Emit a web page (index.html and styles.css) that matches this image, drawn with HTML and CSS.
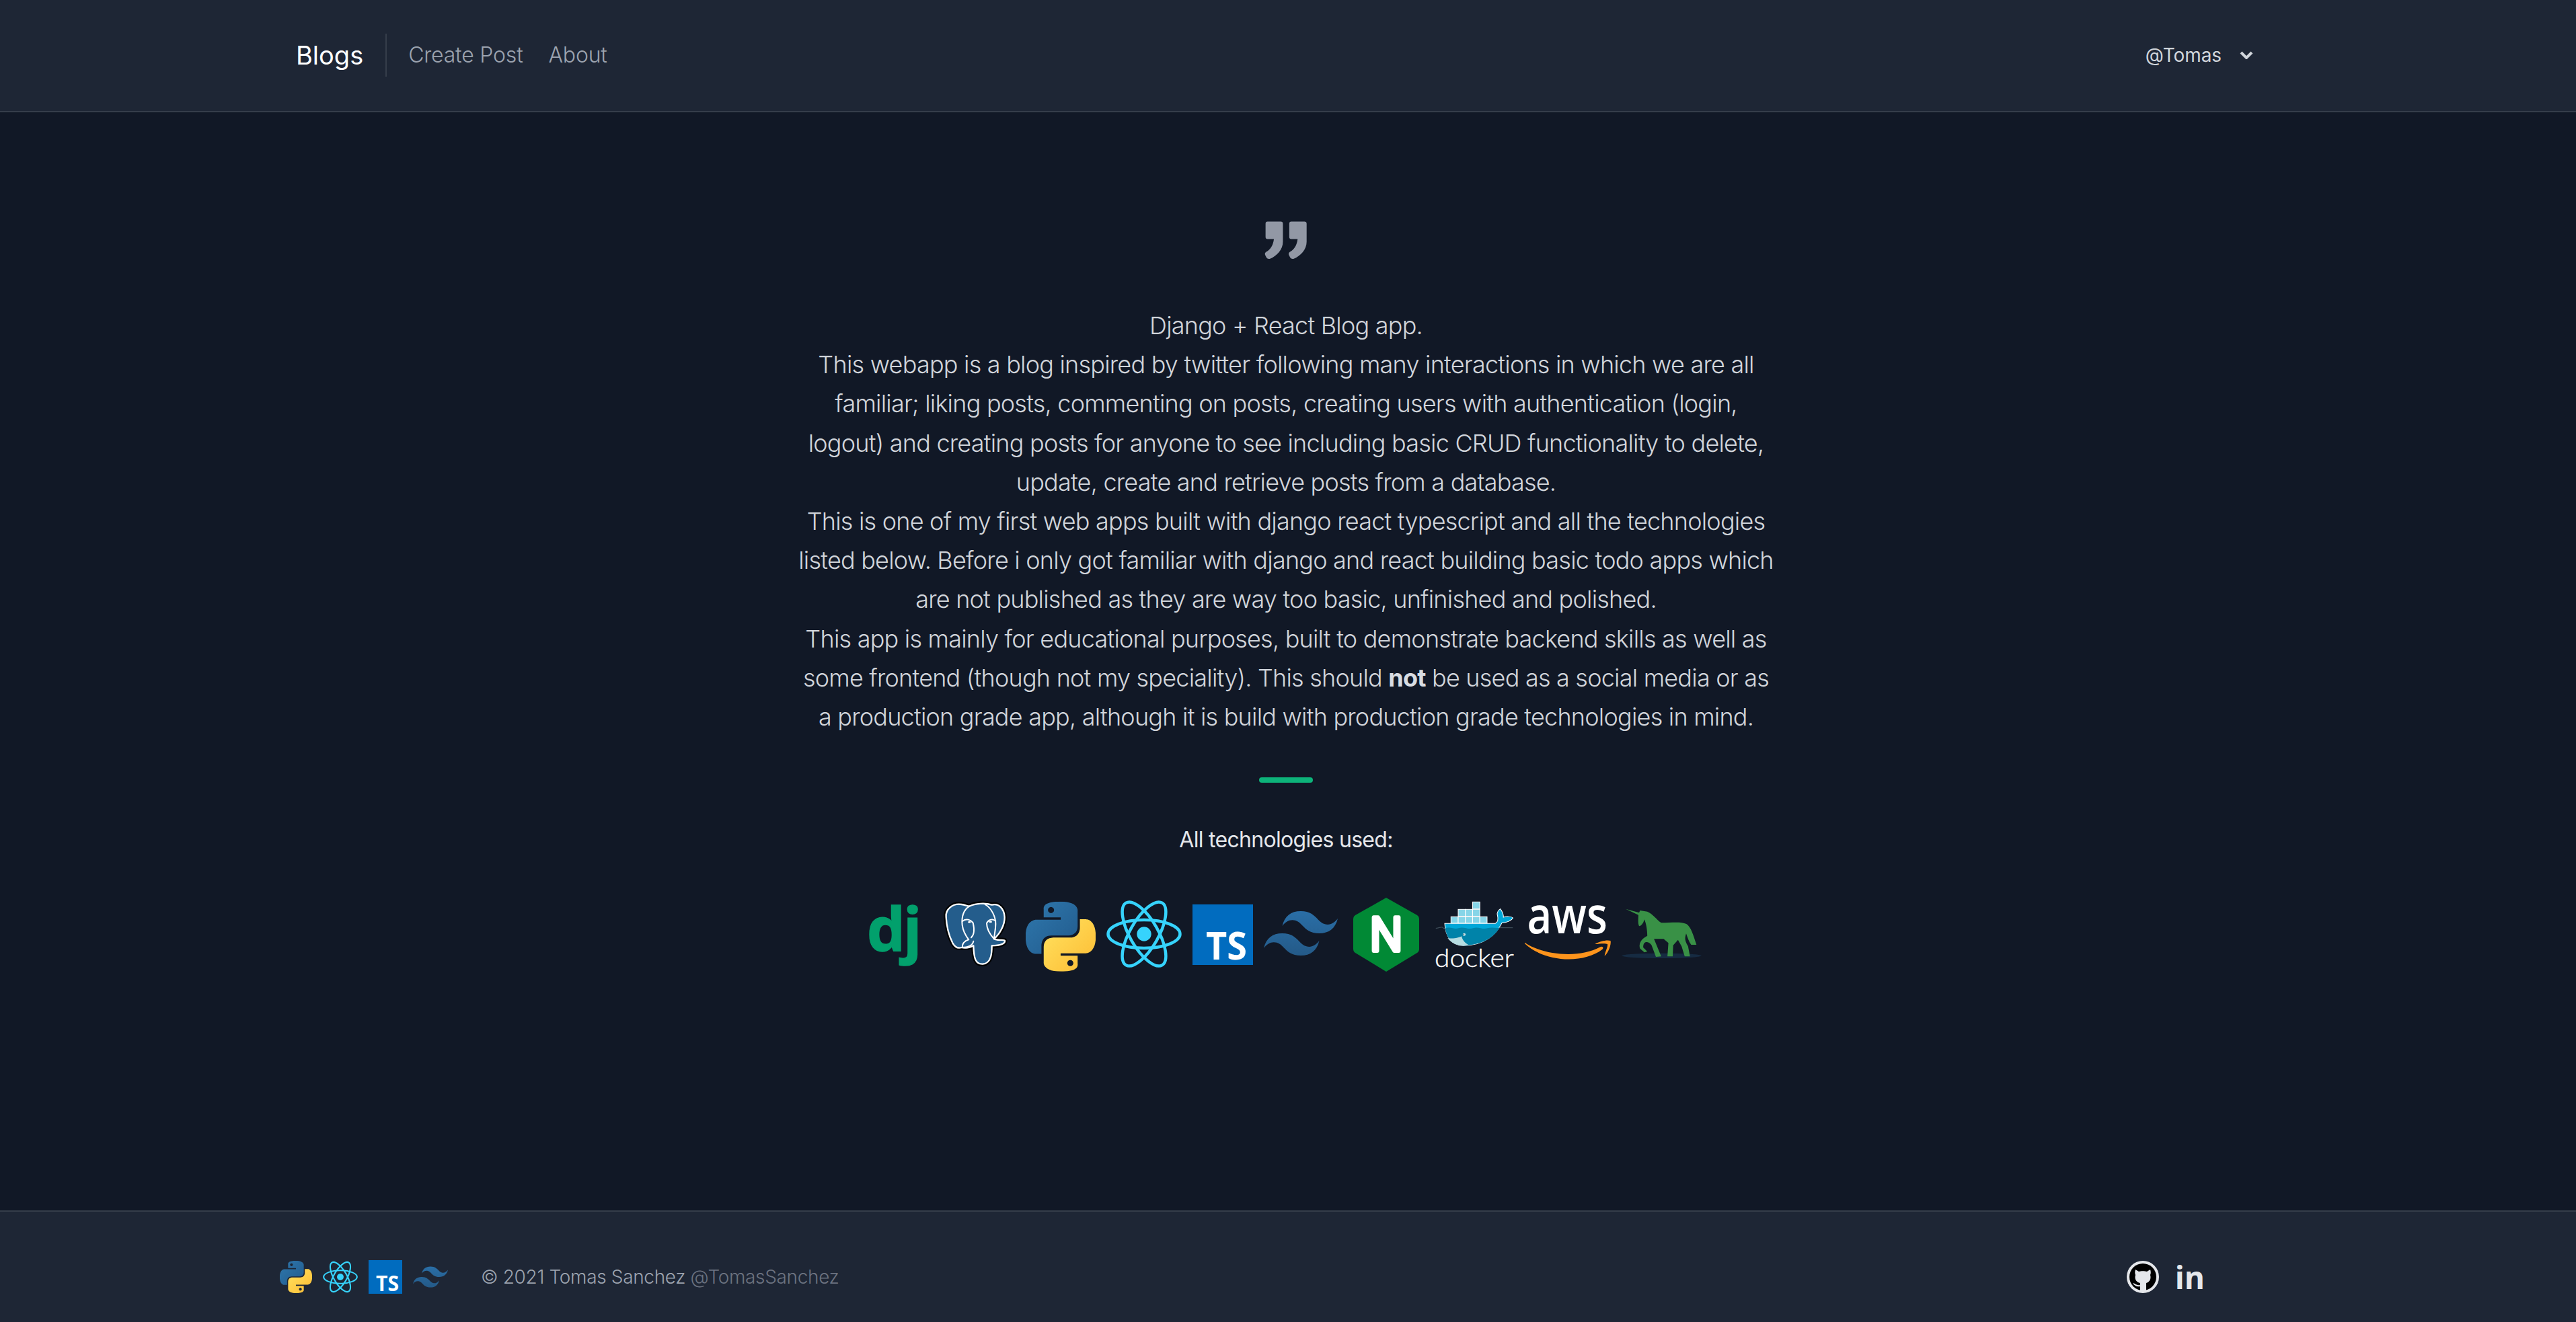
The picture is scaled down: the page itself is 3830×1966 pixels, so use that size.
FILE: index.html
```html
<!DOCTYPE html>
<html lang="en">
<head>
<meta charset="utf-8">
<title>Blogs</title>
<link rel="stylesheet" href="styles.css">
</head>
<body>
<svg class="defs" width="0" height="0" aria-hidden="true">
  <defs>
    <linearGradient id="pyBlue" x1="0" y1="0" x2="1" y2="1"><stop offset="0" stop-color="#2f78ad"/><stop offset="1" stop-color="#215a8c"/></linearGradient>
    <linearGradient id="pyYellow" x1="0.2" y1="0.2" x2="0.9" y2="0.9"><stop offset="0" stop-color="#ffdb57"/><stop offset="1" stop-color="#fdbf37"/></linearGradient>
    <linearGradient id="twGrad" x1="0" y1="0" x2="0" y2="1"><stop offset="0" stop-color="#2a6ea6"/><stop offset="1" stop-color="#245a88"/></linearGradient>
    <symbol id="python" viewBox="0 0 24 24">
      <path fill="url(#pyBlue)" fill-rule="evenodd" d="M14.25.18l.9.2.73.26.59.3.45.32.34.34.25.34.16.33.1.3.04.26.02.2-.01.13V8.5l-.05.63-.13.55-.21.46-.26.38-.3.31-.33.25-.35.19-.35.14-.33.1-.3.07-.26.04-.21.02H8.77l-.69.05-.59.14-.5.22-.41.27-.33.32-.27.35-.2.36-.15.37-.1.35-.07.32-.04.27-.02.21v3.06H3.17l-.21-.03-.28-.07-.32-.12-.35-.18-.36-.26-.36-.36-.35-.46-.32-.59-.28-.73-.21-.88-.14-1.05-.05-1.23.06-1.22.16-1.04.24-.87.32-.71.36-.57.4-.44.42-.33.42-.24.4-.16.36-.1.32-.05.24-.01h.16l.06.01h8.16v-.83H6.18l-.01-2.75-.02-.37.05-.34.11-.31.17-.28.25-.26.31-.23.38-.2.44-.18.51-.15.58-.12.64-.1.71-.06.77-.04.84-.02 1.27.05zm-6.3 1.98l-.23.33-.08.41.08.41.23.34.33.22.41.09.41-.09.33-.22.23-.34.08-.41-.08-.41-.23-.33-.33-.22-.41-.09-.41.09z"/>
      <path fill="url(#pyYellow)" fill-rule="evenodd" d="M21.04 6.11l.28.06.32.12.35.18.36.27.36.35.35.47.32.59.28.73.21.88.14 1.04.05 1.23-.06 1.23-.16 1.04-.24.86-.32.71-.36.57-.4.45-.42.33-.42.24-.4.16-.36.09-.32.05-.24.02-.16-.01h-8.22v.82h5.84l.01 2.76.02.36-.05.34-.11.31-.17.29-.25.25-.31.24-.38.2-.44.17-.51.15-.58.13-.64.09-.71.07-.77.04-.84.01-1.27-.04-1.07-.14-.9-.2-.73-.25-.59-.3-.45-.33-.34-.34-.25-.34-.16-.33-.1-.3-.04-.25-.02-.2.01-.13v-5.34l.05-.64.13-.54.21-.46.26-.38.3-.32.33-.24.35-.2.35-.14.33-.1.3-.06.26-.04.21-.02.13-.01h5.84l.69-.05.59-.14.5-.21.41-.28.33-.32.27-.35.2-.36.15-.36.1-.35.07-.32.04-.28.02-.21V6.07h2.09l.14.01zm-6.47 14.25l-.23.33-.08.41.08.41.23.33.33.23.41.08.41-.08.33-.23.23-.33.08-.41-.08-.41-.23-.33-.33-.23-.41-.08-.41.08z"/>
    </symbol>
    <symbol id="react" viewBox="0 0 112 112">
      <g fill="none" stroke="#36d3fc" stroke-width="4.5">
        <ellipse cx="56" cy="56" rx="53.5" ry="21"/>
        <ellipse cx="56" cy="56" rx="53.5" ry="21" transform="rotate(60 56 56)"/>
        <ellipse cx="56" cy="56" rx="53.5" ry="21" transform="rotate(120 56 56)"/>
      </g>
      <circle cx="56" cy="56" r="10.7" fill="#36d3fc"/>
    </symbol>
    <symbol id="tailwind" viewBox="0 0 24 24.4">
      <path fill="url(#twGrad)" d="M12.001,4.8c-3.2,0-5.2,1.6-6,4.8c1.2-1.6,2.6-2.2,4.2-1.8c0.913,0.228,1.565,0.89,2.288,1.624 C13.666,10.618,15.027,12,18.001,12c3.2,0,5.2-1.6,6-4.8c-1.2,1.6-2.6,2.2-4.2,1.8c-0.913-0.228-1.565-0.89-2.288-1.624 C16.337,6.182,14.976,4.8,12.001,4.8z M6.001,12c-3.2,0-5.2,1.6-6,4.8c1.2-1.6,2.6-2.2,4.2-1.8c0.913,0.228,1.565,0.89,2.288,1.624 c1.177,1.194,2.538,2.576,5.512,2.576c3.2,0,5.2-1.6,6-4.8c-1.2,1.6-2.6,2.2-4.2,1.8c-0.913-0.228-1.565-0.89-2.288-1.624 C10.337,13.382,8.976,12,6.001,12z"/>
    </symbol>
  </defs>
</svg>

<header class="topbar">
  <nav class="nav-left">
    <a class="brand">Blogs</a>
    <span class="nav-sep"></span>
    <a class="nav-link">Create Post</a>
    <a class="nav-link">About</a>
  </nav>
  <div class="user-menu">
    <span>@Tomas</span>
    <svg class="chevron" viewBox="0 0 20 12"><path d="M2 2l8 8 8-8" fill="none" stroke="#d1d5db" stroke-width="4"/></svg>
  </div>
</header>

<main class="content">
  <svg class="quote" viewBox="298 88 196 172">
    <g fill="#9298a5">
      <path id="qm" d="M312,88 H372 Q382,88 382,98 V180 C382,215 355,245 322,258 Q312,260 307,252 L301,240 Q298,232 306,226 C325,218 338,195 341,168 H312 Q303,168 303,158 V98 Q303,88 312,88Z"/>
      <use href="#qm" x="108"/>
    </g>
  </svg>
  <p class="about">
    Django + React Blog app.<br>
    This webapp is a blog inspired by twitter following many interactions in which we are all familiar; liking posts, commenting on posts, creating users with authentication (login, logout) and creating posts for anyone to see including basic CRUD functionality to delete, update, create and retrieve posts from a database.<br>
    This is one of my first web apps built with django react typescript and all the technologies listed below. Before i only got familiar with django and react building basic todo apps which are not published as they are way too basic, unfinished and polished.<br>
    This app is mainly for educational purposes, built to demonstrate backend skills as well as some frontend (though not my speciality). This should <strong>not</strong> be used as a social media or as a production grade app, although it is build with production grade technologies in mind.
  </p>
  <span class="accent"></span>
  <h2 class="tech-title">All technologies used:</h2>
  <div class="tech-row">
    <svg class="ic-dj" viewBox="0 0 107 112"><text class="t-dj" x="8" y="81">dj</text></svg>
    <svg class="ic-pg" viewBox="428 72 315 336">
      <path d="M436,165 C432,130 465,102 505,108 C520,110 530,115 540,116 C565,104 610,100 640,110 C670,102 695,125 697,165 C698,200 675,240 650,262 C665,272 695,262 698,270 C700,282 680,292 640,292 C640,320 640,370 600,374 C565,376 560,345 558,292 C545,300 520,305 505,300 C490,305 475,298 465,280 C450,250 438,205 436,165Z" fill="none" stroke="#000" stroke-width="20" stroke-linejoin="round"/>
      <path d="M436,165 C432,130 465,102 505,108 C520,110 530,115 540,116 C565,104 610,100 640,110 C670,102 695,125 697,165 C698,200 675,240 650,262 C665,272 695,262 698,270 C700,282 680,292 640,292 C640,320 640,370 600,374 C565,376 560,345 558,292 C545,300 520,305 505,300 C490,305 475,298 465,280 C450,250 438,205 436,165Z" fill="#245d8c" stroke="#fff" stroke-width="7" stroke-linejoin="round"/>
      <g fill="none" stroke="#fff" stroke-width="6" stroke-linecap="round" stroke-linejoin="round">
        <path d="M540,116 C510,135 505,170 508,200 C512,230 525,250 537,265 C518,270 505,285 510,300 C530,300 555,292 558,272"/>
        <path d="M610,108 C640,125 657,165 657,195 C657,225 650,245 650,262"/>
        <path d="M510,182 C525,170 545,175 556,190 C563,220 560,245 548,256"/>
        <path d="M617,192 C625,175 645,170 657,182"/>
        <path d="M617,192 C617,215 630,240 650,262"/>
      </g>
      <ellipse cx="540" cy="187" rx="7" ry="4" fill="#fff"/>
      <ellipse cx="634" cy="186" rx="7" ry="4" fill="#fff"/>
    </svg>
    <svg class="ic-py" viewBox="0 -1.8 24 25.85"><use href="#python" width="24" height="24"/></svg>
    <svg class="ic-re"><use href="#react"/></svg>
    <svg class="ic-ts" viewBox="0 0 90 112"><rect y="12" width="90" height="90" fill="#016cbf"/><text class="t-ts" x="20" y="94" textLength="61" lengthAdjust="spacingAndGlyphs">TS</text></svg>
    <svg class="ic-tw"><use href="#tailwind"/></svg>
    <svg class="ic-ng" viewBox="0 0 112 112">
      <path d="M56,2 L102,28 Q105,30 105,34 V78 Q105,82 102,84 L56,112 L10,84 Q7,82 7,78 V34 Q7,30 10,28Z" fill="#018935"/>
      <text class="t-ng" x="56" y="81" text-anchor="middle" textLength="50" lengthAdjust="spacingAndGlyphs">N</text>
    </svg>
    <svg class="ic-dk" viewBox="370 72 330 336" preserveAspectRatio="none">
      <g fill="#86d5e8" stroke="#fff" stroke-width="3">
        <rect x="438" y="163" width="30" height="29"/><rect x="468" y="163" width="30" height="29"/><rect x="498" y="163" width="30" height="29"/><rect x="528" y="163" width="30" height="29"/><rect x="558" y="163" width="30" height="29"/>
        <rect x="468" y="130" width="30" height="31"/><rect x="498" y="130" width="30" height="31"/><rect x="528" y="130" width="30" height="31"/>
        <rect x="528" y="97" width="30" height="31"/>
      </g>
      <path d="M412,193 L622,193 C640,185 632,160 630,150 C632,138 640,130 643,128 C652,140 656,150 656,165 C670,160 690,162 696,168 C690,180 670,190 650,190 C625,245 575,291 490,292 C440,292 415,250 412,193Z" fill="#00a7d8" stroke="#fff" stroke-width="3"/>
      <path d="M414,215 C440,205 450,222 470,214 C490,205 510,222 530,214 C550,205 570,222 590,214 C610,208 625,215 640,212 C615,255 570,289 490,290 C442,290 420,255 414,215Z" fill="#0083a9"/>
      <path d="M424,258 C445,262 470,258 482,250 C485,265 495,280 510,288 C480,294 445,290 424,258Z" fill="#b7dde2"/>
      <circle cx="493" cy="242" r="6" fill="#c8e2e6"/><circle cx="491" cy="241" r="2" fill="#12303f"/>
      <path d="M375,215 C395,212 400,204 408,215 H412 M640,212 H695" fill="none" stroke="#3c4a56" stroke-width="4"/>
      <text class="t-dk" x="370" y="388" textLength="330" lengthAdjust="spacingAndGlyphs">docker</text>
    </svg>
    <svg class="ic-aw" viewBox="748 72 358 336" preserveAspectRatio="none">
      <text class="t-aw" x="758" y="238" textLength="334" lengthAdjust="spacingAndGlyphs">aws</text>
      <path d="M748,278 C825,335 975,350 1062,298 C1072,292 1078,302 1070,309 C990,375 830,365 748,283Z" fill="#fd941c"/>
      <path d="M1040,285 C1060,272 1090,265 1105,270 C1108,290 1095,325 1080,338 C1082,320 1095,295 1092,285 C1080,280 1055,285 1040,285Z" fill="#fd941c"/>
    </svg>
    <svg class="ic-gu" viewBox="1155 72 370 336" preserveAspectRatio="none">
      <ellipse cx="1322" cy="337" rx="166" ry="11" fill="#162b42"/>
      <path fill="#399146" d="M1172,128 L1228,145 L1232,135 L1262,140 C1285,150 1300,175 1320,190 C1360,190 1400,183 1425,195 C1445,210 1452,240 1467,288 L1445,288 C1435,275 1430,255 1424,238 C1420,255 1415,265 1432,295 L1440,340 L1418,340 L1405,295 L1390,266 L1370,290 L1368,340 L1346,340 L1350,280 L1330,262 L1290,262 L1320,340 L1298,342 L1280,290 C1270,275 1245,265 1245,300 L1262,318 L1250,322 L1232,305 C1225,285 1235,262 1262,248 C1262,225 1258,195 1250,175 C1245,195 1235,205 1228,205 C1222,190 1225,170 1225,155 Z"/>
    </svg>
  </div>
</main>

<footer class="bottombar">
  <div class="foot-left">
    <div class="foot-icons">
      <svg class="f-py" viewBox="0 0 24 24"><use href="#python" width="24" height="24"/></svg>
      <svg class="f-re" viewBox="0 0 112 112"><use href="#react" width="112" height="112"/></svg>
      <svg class="f-ts" viewBox="0 0 50 50"><rect width="50" height="50" fill="#016cbf"/><text class="t-fts" x="11" y="46" textLength="34" lengthAdjust="spacingAndGlyphs">TS</text></svg>
      <svg class="f-tw" viewBox="0 4.8 24 14.4"><use href="#tailwind" width="24" height="24.4"/></svg>
    </div>
    <p class="copyright">© 2021 Tomas Sanchez <span class="handle">@TomasSanchez</span></p>
  </div>
  <div class="socials">
    <svg class="s-gh" viewBox="0 0 48 48">
      <circle cx="24" cy="24" r="24" fill="#e5e7eb"/>
      <circle cx="24" cy="24" r="20" fill="#000"/>
      <path fill="#e5e7eb" d="M13,13 L18,16 C21,15 27,15 30,16 L35,13 C36,16 36,19 35,21 C37,28 33,32 29,33 V44 H20 V38 C15,39 11,37 9,33 C13,34 15,37 20,36 V33 C15,32 11,28 13,21 C12,19 12,16 13,13Z"/>
    </svg>
    <span class="in-mark">in</span>
  </div>
</footer>
</body>
</html>
```
FILE: styles.css
```css
* { box-sizing: border-box; margin: 0; padding: 0; }
html, body { height: 100%; }
body {
  display: flex;
  flex-direction: column;
  min-height: 100vh;
  background: #111826;
  color: #d1d5db;
  font-family: Inter, "Liberation Sans", sans-serif;
  overflow: hidden;
}
.defs { position: absolute; }
a { color: inherit; text-decoration: none; }

.topbar {
  display: flex;
  align-items: center;
  justify-content: space-between;
  height: 167px;
  padding: 0 480px 2px 440px;
  background: #1e2635;
  border-bottom: 2px solid #353d4a;
}
.nav-left { display: flex; align-items: center; }
.brand { font-size: 38px; color: #fff; }
.nav-sep { width: 2px; height: 64px; margin: 0 32px 0 33px; background: #353d4a; }
.nav-link { font-size: 32px; font-weight: 300; letter-spacing: -0.2px; color: #9ca3af; margin-right: 38px; }
.user-menu { display: flex; align-items: center; gap: 27px; font-size: 28px; letter-spacing: -0.1px; color: #d1d5db; }
.chevron { width: 20px; height: 12px; }

.content {
  flex: 1;
  display: flex;
  flex-direction: column;
  align-items: center;
  padding: 162px 6px 0 0;
}
.quote { width: 64px; height: 57px; }
.about {
  width: 1456px;
  margin-top: 69px;
  font-size: 36px;
  font-weight: 300;
  letter-spacing: -0.78px;
  line-height: 58.2px;
  text-align: center;
}
.about strong { font-weight: 700; color: #d8dce2; }
.accent { width: 80px; height: 8px; margin-top: 61px; border-radius: 4px; background: #0db37a; }
.tech-title { margin-top: 61px; font-size: 32px; font-weight: 400; letter-spacing: -0.7px; line-height: 48px; color: #e5e7eb; }
.tech-row { display: flex; gap: 16px; margin-top: 60px; height: 112px; }
.tech-row svg { height: 112px; flex: none; overflow: visible; }
.ic-dj { width: 107px; }
.ic-pg { width: 105px; }
.ic-py { width: 104px; }
.ic-re { width: 112px; }
.ic-ts { width: 90px; }
.ic-tw { width: 110px; }
.ic-ng { width: 112px; }
.ic-dk { width: 118px; }
.ic-aw { width: 128px; }
.ic-gu { width: 132px; }

.t-dj { font: 700 90px "Open Sans", sans-serif; letter-spacing: -3px; fill: #02a06c; stroke: #02a06c; stroke-width: 1.5px; }
.t-ts { font: 700 57px "Open Sans", sans-serif; fill: #fff; }
.t-ng { font: 400 70px "Open Sans", sans-serif; fill: #fff; stroke: #fff; stroke-width: 6px; stroke-linejoin: round; }
.t-dk { font: 300 114px Lato, sans-serif; fill: #fff; stroke: #fff; stroke-width: 1px; }
.t-aw { font: 600 228px "Open Sans", sans-serif; fill: #fff; }

.bottombar {
  display: flex;
  align-items: center;
  justify-content: space-between;
  height: 166px;
  padding: 30px 552px 0 416px;
  background: #1e2635;
  border-top: 2px solid #353d4a;
}
.foot-left { display: flex; align-items: center; gap: 49px; }
.foot-icons { display: flex; align-items: center; gap: 16px; }
.foot-icons svg { overflow: visible; }
.f-py { width: 48px; height: 48px; }
.f-re { width: 52px; height: 52px; }
.f-ts { width: 50px; height: 50px; }
.f-tw { width: 52px; height: 34px; }
.t-fts { font: 700 32px "Open Sans", sans-serif; fill: #fff; }
.copyright { font-size: 28px; font-weight: 300; letter-spacing: -0.35px; color: #9ca3af; }
.handle { color: #6b7280; }
.socials { display: flex; align-items: center; gap: 24px; }
.s-gh { width: 48px; height: 48px; }
.in-mark { font: 700 46px/48px "Open Sans", sans-serif; color: #e5e7eb; }
```
